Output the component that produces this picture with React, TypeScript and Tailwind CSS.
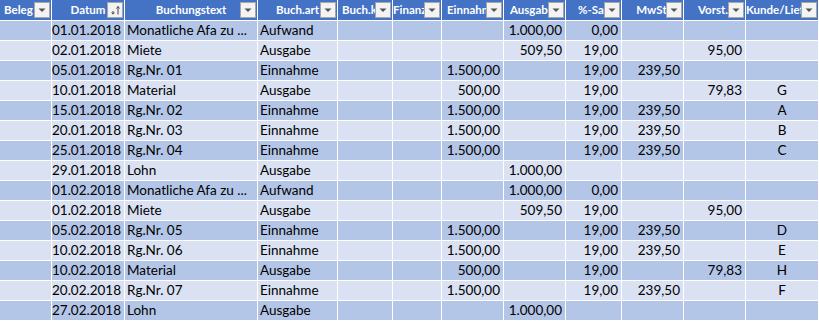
import React from "react"

type Align = "left" | "right" | "center"

interface Column {
  title: string
  width: string
  align: Align
  head: string // header text placement
  sorted?: boolean
}

// Header captions are cut off by the filter buttons in the sheet, so only the visible part is shown.
const columns: Column[] = [
  { title: "Beleg", width: "w-[52px]", align: "left", head: "justify-start pl-[4px]" },
  { title: "Datum", width: "w-[73px]", align: "right", head: "justify-center", sorted: true },
  { title: "Buchungstext", width: "w-[133px]", align: "left", head: "justify-center" },
  { title: "Buch.art", width: "w-[80px]", align: "left", head: "justify-center" },
  { title: "Buch.k", width: "w-[55px]", align: "left", head: "justify-start pl-[4px]" },
  { title: "Finanz", width: "w-[49px]", align: "left", head: "justify-start pl-0" },
  { title: "Einnahm", width: "w-[62px]", align: "right", head: "justify-start pl-[5px]" },
  { title: "Ausgabe", width: "w-[62px]", align: "right", head: "justify-start pl-[6px]" },
  { title: "%-Sat", width: "w-[56px]", align: "right", head: "justify-start pl-[12px]" },
  { title: "MwSt", width: "w-[62px]", align: "right", head: "justify-center pr-[2px]" },
  { title: "Vorst.", width: "w-[62px]", align: "right", head: "justify-start pl-[14px]" },
  { title: "Kunde/Liefe", width: "w-[73px]", align: "center", head: "justify-start pl-0" },
]

// Beleg, Datum, Text, Art, Konto, Finanz, Einnahme, Ausgabe, %, MwSt, Vorst, Kunde
const rows: string[][] = [
  ["", "01.01.2018", "Monatliche Afa zu ...", "Aufwand", "", "", "", "1.000,00", "0,00", "", "", ""],
  ["", "02.01.2018", "Miete", "Ausgabe", "", "", "", "509,50", "19,00", "", "95,00", ""],
  ["", "05.01.2018", "Rg.Nr. 01", "Einnahme", "", "", "1.500,00", "", "19,00", "239,50", "", ""],
  ["", "10.01.2018", "Material", "Ausgabe", "", "", "500,00", "", "19,00", "", "79,83", "G"],
  ["", "15.01.2018", "Rg.Nr. 02", "Einnahme", "", "", "1.500,00", "", "19,00", "239,50", "", "A"],
  ["", "20.01.2018", "Rg.Nr. 03", "Einnahme", "", "", "1.500,00", "", "19,00", "239,50", "", "B"],
  ["", "25.01.2018", "Rg.Nr. 04", "Einnahme", "", "", "1.500,00", "", "19,00", "239,50", "", "C"],
  ["", "29.01.2018", "Lohn", "Ausgabe", "", "", "", "1.000,00", "", "", "", ""],
  ["", "01.02.2018", "Monatliche Afa zu ...", "Aufwand", "", "", "", "1.000,00", "0,00", "", "", ""],
  ["", "01.02.2018", "Miete", "Ausgabe", "", "", "", "509,50", "19,00", "", "95,00", ""],
  ["", "05.02.2018", "Rg.Nr. 05", "Einnahme", "", "", "1.500,00", "", "19,00", "239,50", "", "D"],
  ["", "10.02.2018", "Rg.Nr. 06", "Einnahme", "", "", "1.500,00", "", "19,00", "239,50", "", "E"],
  ["", "10.02.2018", "Material", "Ausgabe", "", "", "500,00", "", "19,00", "", "79,83", "H"],
  ["", "20.02.2018", "Rg.Nr. 07", "Einnahme", "", "", "1.500,00", "", "19,00", "239,50", "", "F"],
  ["", "27.02.2018", "Lohn", "Ausgabe", "", "", "", "1.000,00", "", "", "", ""],
]

const alignClass: Record<Align, string> = {
  left: "justify-start pl-[2px]",
  right: "justify-end pr-[3px]",
  center: "justify-center",
}

function FilterButton({ sorted }: { sorted?: boolean }) {
  return (
    <div className="absolute right-[1px] top-[2px] grid h-[16px] w-[16px] place-items-center border border-[#a6a6a6] bg-[#f3f3f3]">
      {sorted ? (
        <svg width="14" height="14" viewBox="0 0 14 14">
          {/* small filter arrow + ascending sort arrow */}
          <path d="M3 9.5h4l-2 2z" fill="#444" />
          <path d="M5 8v1.5" stroke="#444" strokeWidth="1" />
          <path d="M10 3.5v8" stroke="#444" strokeWidth="1" />
          <path d="M8.5 5.5L10 3.5l1.5 2" stroke="#444" strokeWidth="1" fill="none" />
        </svg>
      ) : (
        <svg width="10" height="6" viewBox="0 0 10 6">
          <path d="M1.5 1.5h7L5 5z" fill="#555" />
        </svg>
      )}
    </div>
  )
}

export default function App() {
  return (
    <div className="h-[321px] w-[819px] overflow-hidden bg-white font-['Lato',sans-serif] text-[13.5px] text-black">
      <div className="flex h-[21px] w-max">
        {columns.map((col) => (
          <div
            key={col.title}
            className={`relative flex h-[21px] ${col.width} flex-none items-start overflow-hidden border-r border-b border-white bg-[#4472c4] pt-[2px] ${col.head}`}
          >
            <span className="whitespace-nowrap text-[11.5px] font-bold leading-[16px] text-white">{col.title}</span>
            <FilterButton sorted={col.sorted} />
          </div>
        ))}
      </div>
      {rows.map((row, i) => (
        <div key={i} className={`flex h-[20px] w-max ${i % 2 === 0 ? "bg-[#b4c6e7]" : "bg-[#d9e1f2]"}`}>
          {row.map((cell, j) => (
            <div
              key={j}
              className={`flex h-[20px] ${columns[j].width} flex-none items-center overflow-hidden whitespace-nowrap border-r border-b border-white ${alignClass[columns[j].align]}`}
            >
              {cell}
            </div>
          ))}
        </div>
      ))}
    </div>
  )
}
